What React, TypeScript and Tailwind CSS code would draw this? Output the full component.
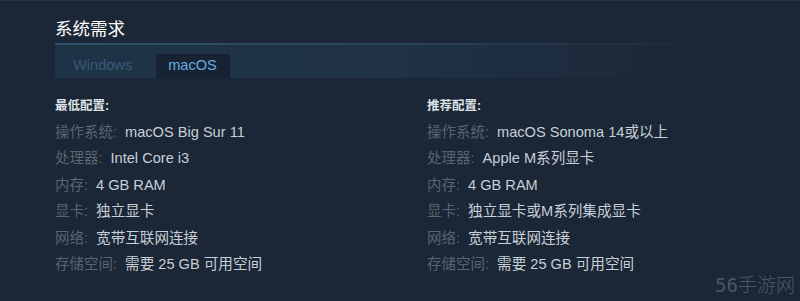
import React from "react";

const font = { fontFamily: '"Liberation Sans", Arial, "Noto Sans CJK SC", sans-serif' };

type Row = [string, string];

const minRows: Row[] = [
  ["操作系统:", "macOS Big Sur 11"],
  ["处理器:", "Intel Core i3"],
  ["内存:", "4 GB RAM"],
  ["显卡:", "独立显卡"],
  ["网络:", "宽带互联网连接"],
  ["存储空间:", "需要 25 GB 可用空间"],
];

const recRows: Row[] = [
  ["操作系统:", "macOS Sonoma 14或以上"],
  ["处理器:", "Apple M系列显卡"],
  ["内存:", "4 GB RAM"],
  ["显卡:", "独立显卡或M系列集成显卡"],
  ["网络:", "宽带互联网连接"],
  ["存储空间:", "需要 25 GB 可用空间"],
];

function Column({ title, rows }: { title: string; rows: Row[] }) {
  return (
    <div>
      <div className="text-[12.5px] leading-[26px] font-bold text-[#dfe3e6]">{title}</div>
      {rows.map(([k, v], i) => (
        <div key={i} className="flex items-center leading-[26.4px] whitespace-nowrap">
          <span className="text-[#58646f] text-[14.5px]">{k}</span>
          <span className="ml-[8px] text-[14.6px] text-[#c7d0d8]">{v}</span>
        </div>
      ))}
    </div>
  );
}

export default function App() {
  return (
    <div
      className="relative w-[800px] h-[301px] bg-[#1b2636] border-t border-[#2a3544] overflow-hidden"
      style={font}
    >
      <div className="pl-[55px] pr-[78px] pt-[17px]">
        <h2 className="text-[17.5px] leading-[22px] text-white font-normal">系统需求</h2>
        <div className="mt-[3px] h-[2px] bg-linear-to-r from-[#2f5068] via-[#2a455c] to-[#1b2636]" />
        <div className="h-[33px] bg-linear-to-r from-[#1f3347] via-[#1f3246] to-[#1b2636] flex items-end gap-[12px] pl-[6px]">
          <div className="h-[24px] px-[12px] flex items-center text-[14.6px] text-[#385a78]">Windows</div>
          <div className="h-[24px] pl-[12px] pr-[13px] flex items-center text-[14.6px] text-[#62aee0] bg-[#172232]">
            macOS
          </div>
        </div>
      </div>
      <div className="grid grid-cols-[372px_1fr] pl-[55px] mt-[15px]">
        <Column title="最低配置:" rows={minRows} />
        <Column title="推荐配置:" rows={recRows} />
      </div>
      <div
        className="absolute right-[5px] bottom-[5px] text-[19px] leading-[22px] font-light text-[#4c5662]"
        style={{ fontFamily: '"DejaVu Sans Mono", "Noto Sans CJK SC", monospace' }}
      >
        56手游网
      </div>
    </div>
  );
}
